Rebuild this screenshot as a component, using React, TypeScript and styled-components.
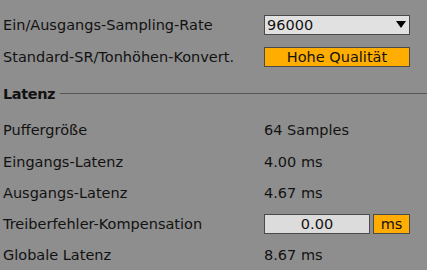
import React from "react";
import styled, { createGlobalStyle } from "styled-components";

const Global = createGlobalStyle`
  html, body { margin: 0; padding: 0; background: #8e8e8e; }
  body { font-family: "DejaVu Sans", "Noto Sans", sans-serif; color: #121212; }
`;

const Panel = styled.div`
  width: 427px;
  height: 270px;
  overflow: hidden;
  box-sizing: border-box;
  padding: 9px 0 0 3px;
  display: flex;
  flex-direction: column;
  font-size: 14.5px;
`;

const Row = styled.div<{ $h: number; $mt?: number }>`
  display: grid;
  grid-template-columns: 261px 1fr;
  align-items: center;
  height: ${(p) => p.$h}px;
  margin-top: ${(p) => p.$mt ?? 0}px;
`;

const Label = styled.div`
  white-space: nowrap;
`;

const Value = styled.div`
  white-space: nowrap;
`;

const Section = styled.div`
  display: flex;
  align-items: center;
  gap: 5px;
  height: 32px;
  margin-top: 5px;
  font-weight: bold;
  letter-spacing: -0.4px;
`;

const Rule = styled.div`
  flex: 1;
  height: 1px;
  background: #555;
  margin-top: -1px;
`;

const Select = styled.div`
  width: 146px;
  height: 20px;
  box-sizing: border-box;
  border: 1px solid #4a4a4a;
  background: #e1e1e1;
  display: flex;
  align-items: center;
  justify-content: space-between;
  padding: 0 2px 0 2px;
`;

const Arrow = styled.svg`
  width: 10px;
  height: 8px;
  margin-right: 1px;
`;

const OrangeButton = styled.div<{ $w: number }>`
  width: ${(p) => p.$w}px;
  height: 20px;
  box-sizing: border-box;
  border: 1px solid #4a4a4a;
  background: #ffad00;
  display: flex;
  align-items: center;
  justify-content: center;
`;

const Controls = styled.div`
  display: flex;
  gap: 3px;
`;

const Field = styled.div`
  width: 106px;
  height: 20px;
  box-sizing: border-box;
  border: 1px solid #4a4a4a;
  background: #dcdcdc;
  display: flex;
  align-items: center;
  justify-content: center;
`;

export default function App() {
  return (
    <>
      <Global />
      <Panel>
        <Row $h={32}>
          <Label>Ein/Ausgangs-Sampling-Rate</Label>
          <Select>
            <span>96000</span>
            <Arrow viewBox="0 0 10 8">
              <polygon points="0,0 10,0 5,7" fill="#000" />
            </Arrow>
          </Select>
        </Row>
        <Row $h={32}>
          <Label>Standard-SR/Tonhöhen-Konvert.</Label>
          <OrangeButton $w={146}>Hohe Qualität</OrangeButton>
        </Row>
        <Section>
          <span>Latenz</span>
          <Rule />
        </Section>
        <Row $h={32} $mt={4}>
          <Label>Puffergröße</Label>
          <Value>64 Samples</Value>
        </Row>
        <Row $h={31}>
          <Label>Eingangs-Latenz</Label>
          <Value>4.00 ms</Value>
        </Row>
        <Row $h={31}>
          <Label>Ausgangs-Latenz</Label>
          <Value>4.67 ms</Value>
        </Row>
        <Row $h={31}>
          <Label>Treiberfehler-Kompensation</Label>
          <Controls>
            <Field>0.00</Field>
            <OrangeButton $w={37}>ms</OrangeButton>
          </Controls>
        </Row>
        <Row $h={31}>
          <Label>Globale Latenz</Label>
          <Value>8.67 ms</Value>
        </Row>
      </Panel>
    </>
  );
}
